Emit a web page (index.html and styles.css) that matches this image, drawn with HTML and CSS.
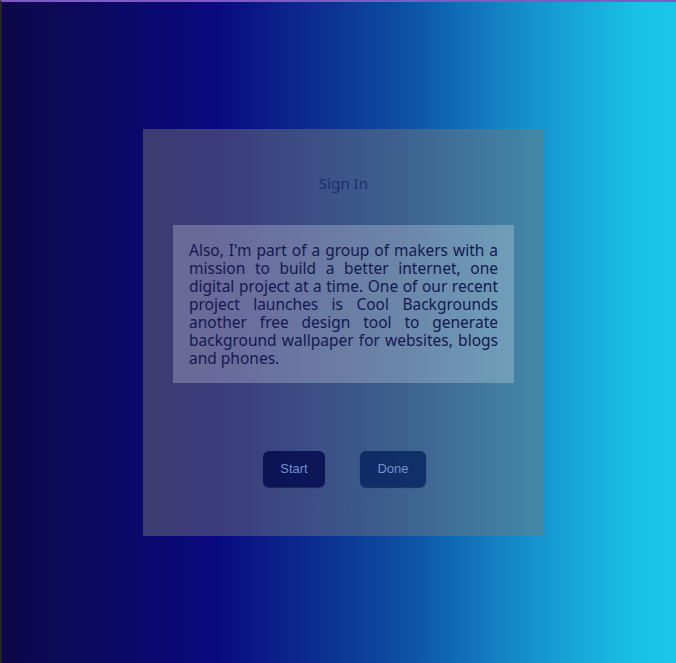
FILE: index.html
```html
<!DOCTYPE html>
<html lang="en">
<head>
<meta charset="utf-8">
<title>Sign In</title>
<link rel="stylesheet" href="styles.css">
</head>
<body>
<div class="page">
  <div class="card">
    <h1 class="title">Sign In</h1>
    <p class="text">Also, I'm part of a group of makers with a mission to build a better internet, one digital project at a time. One of our recent project launches is Cool Backgrounds another free design tool to generate background wallpaper for websites, blogs and phones.</p>
    <div class="actions">
      <button class="btn btn-start">Start</button>
      <button class="btn btn-done">Done</button>
    </div>
  </div>
</div>
</body>
</html>
```

FILE: styles.css
```css
html, body {
  margin: 0;
  padding: 0;
  height: 100%;
}
body {
  background: #222;
}
.page {
  box-sizing: border-box;
  min-height: 100vh;
  border-top: 2px solid #7c5cc4;
  border-left: 2px solid #262626;
  padding: 127px 0 0 141px;
  background: linear-gradient(to right, #0c0848 0%, #0a0a80 32%, #0c4aa0 58%, #1590cc 78%, #18c4e6 95%, #18c6e8 100%);
  display: flex;
  align-items: flex-start;
}
.card {
  box-sizing: border-box;
  width: 401px;
  height: 407px;
  background: rgba(120, 120, 120, 0.46);
  display: flex;
  flex-direction: column;
  align-items: center;
  padding-top: 44px;
}
.title {
  margin: 0;
  font-family: "Noto Sans", "Open Sans", sans-serif;
  font-weight: 400;
  font-size: 15px;
  line-height: 20px;
  color: #1a3068;
}
.text {
  box-sizing: border-box;
  width: 341px;
  margin: 32px 0 0 0;
  padding: 16px;
  background: rgba(255, 255, 255, 0.24);
  font-family: "Noto Sans", "Open Sans", sans-serif;
  font-size: 15.5px;
  line-height: 18px;
  color: #141850;
  text-align: justify;
}
.actions {
  display: flex;
  gap: 35px;
  margin-top: 68px;
  padding-left: 2px;
}
.btn {
  height: 36px;
  padding: 0 0 1px 0;
  border: none;
  border-radius: 6px;
  font-family: "Liberation Sans", Arial, sans-serif;
  font-size: 13px;
  color: #7491cc;
  box-shadow: 0 1px 1px rgba(0, 0, 20, 0.5);
  cursor: pointer;
}
.btn-start {
  width: 62px;
  background: rgba(0, 8, 75, 0.8);
}
.btn-done {
  width: 66px;
  background: rgba(0, 28, 90, 0.72);
}
```
